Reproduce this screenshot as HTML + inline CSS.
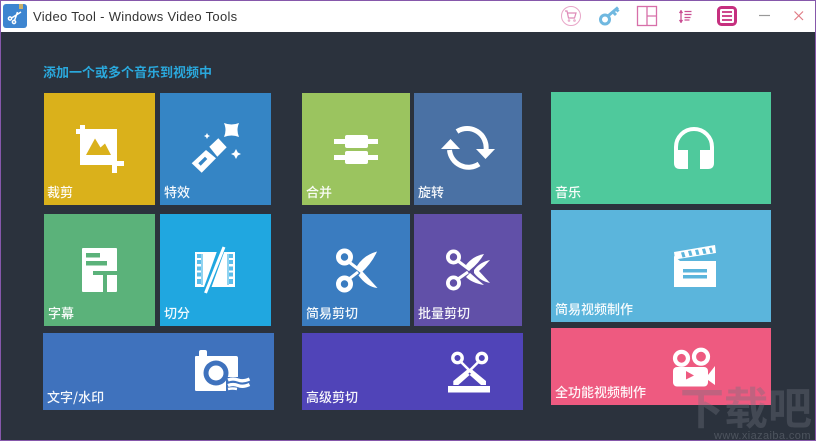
<!DOCTYPE html>
<html><head><meta charset="utf-8"><style>
html,body{margin:0;padding:0;background:#2b323d}
#w{position:relative;width:816px;height:441px;overflow:hidden;background:#2b323d;font-family:"Liberation Sans","Noto Sans CJK SC",sans-serif}
#tb{position:absolute;left:0;top:0;width:816px;height:32px;background:#fff}
#b{position:absolute;left:0;top:0;width:814px;height:439px;border:1px solid #8658ab;z-index:9}
.t{position:absolute}
.l{position:absolute;color:#fff;font-size:13px;line-height:16px;font-weight:500;white-space:nowrap;font-family:"Noto Sans CJK SC",sans-serif;opacity:.95}
svg{position:absolute;left:0;top:0}
</style></head><body><div id="w">
<div id="tb"></div>
<div style="position:absolute;left:33px;top:9px;font-size:13px;line-height:16px;color:#333;letter-spacing:.3px;white-space:nowrap">Video Tool - Windows Video Tools</div>
<div style="position:absolute;left:43px;top:64px;font-size:13px;line-height:16px;font-weight:700;color:#2aa8dc;white-space:nowrap;font-family:'Noto Sans CJK SC',sans-serif">添加一个或多个音乐到视频中</div>

<div class="t" style="left:44px;top:93px;width:111px;height:112px;background:#dab11b"></div>
<div class="t" style="left:160px;top:93px;width:111px;height:112px;background:#3585c5"></div>
<div class="t" style="left:44px;top:214px;width:111px;height:112px;background:#5bb27a"></div>
<div class="t" style="left:160px;top:214px;width:111px;height:112px;background:#20a7e0"></div>
<div class="t" style="left:43px;top:333px;width:231px;height:77px;background:#3f72bd"></div>
<div class="t" style="left:302px;top:93px;width:108px;height:112px;background:#9bc45f"></div>
<div class="t" style="left:414px;top:93px;width:108px;height:112px;background:#4a71a4"></div>
<div class="t" style="left:302px;top:214px;width:108px;height:112px;background:#3a7cc0"></div>
<div class="t" style="left:414px;top:214px;width:108px;height:112px;background:#6150a8"></div>
<div class="t" style="left:302px;top:333px;width:221px;height:77px;background:#5044b8"></div>
<div class="t" style="left:551px;top:92px;width:220px;height:112px;background:#4fc99c"></div>
<div class="t" style="left:551px;top:210px;width:220px;height:112px;background:#5bb5dc"></div>
<div class="t" style="left:551px;top:328px;width:220px;height:77px;background:#ee5a80"></div>

<svg width="816" height="441" viewBox="0 0 816 441">
<!-- app icon -->
<rect x="3" y="4" width="24" height="24" rx="3" fill="#3d85d0"/>
<rect x="19" y="4" width="4" height="5" fill="#c9b06a"/>
<g stroke="#fff" fill="none" stroke-width="1.5"><circle cx="10" cy="18.500" r="1.600"/><circle cx="14" cy="22" r="1.600"/><path d="M11.500 18L21 12M14.500 20.500L17.500 12"/></g>
<!-- toolbar -->
<g fill="none" stroke="#e8a6c8" stroke-width="1"><circle cx="571" cy="16" r="9.500"/><path d="M565 11h2l1.500 7h6l1.500-5h-8.500" stroke="#de8ab8" stroke-width="1.200"/><circle cx="569" cy="20.500" r=".8"/><circle cx="574.500" cy="20.500" r=".8"/></g>
<g fill="none" stroke="#70b8e0"><circle cx="605" cy="19.500" r="4.500" stroke-width="3"/><path d="M608 16L618 7.500M613 12l3 3M616 9l2.500 2.500" stroke-width="3"/></g>
<g fill="none" stroke="#d76fa9" stroke-width="1.300"><rect x="637.500" y="6.500" width="19" height="19"/><path d="M647 6.500v19M647 16h9.500"/></g>
<g fill="none" stroke="#c94d92" stroke-width="1.300"><path d="M681 10v13M679.500 13l1.500-2 1.500 2M679.500 20l1.500 2 1.500-2"/><path d="M684.500 11.500h7M684.500 14.500h7M684.500 17.500h6M684.500 20h5"/></g>
<rect x="718.500" y="7.500" width="17" height="17" rx="3" fill="none" stroke="#c6307f" stroke-width="3"/>
<path d="M722 12h10M722 16h10M722 20h10" stroke="#c6307f" stroke-width="1.800" fill="none"/>
<path d="M759 15.500h11" stroke="#999" stroke-width="1.200"/>
<path d="M794.500 11.500l8.500 8.500M803 11.500l-8.500 8.500" stroke="#e07c86" stroke-width="1.200"/>

<!-- crop -->
<path fill="#fff" d="M80 125h5v4h32v32h7v5h-7v7h-5v-8H80v-31h-4v-5h4z"/>
<path fill="#dab11b" d="M86 155l9-16.500 5.500 9 4.500-4 6 11.500z"/>
<!-- wand -->
<g fill="#fff">
<path d="M191.700 163.300L206 150L216 158.300L201.700 172.800z"/>
<path d="M209.300 146.700L218.300 138.300L226.700 147.300L217.300 156.700z"/>
<path d="M224 123Q231.500 126 239 123Q236 130 239 137Q231.500 134 224 137Q227 130 224 123z"/>
<path d="M236 149L237.800 152.500L241 154L237.800 155.500L236 159L234.200 155.500L231 154L234.200 152.500z"/>
<path d="M207 133L208 135L210 136L208 137L207 139L206 137L204 136L206 135z"/>
</g>
<path fill="#3585c5" d="M198.300 163.300L205 156.700L207.300 159L200.700 165.700z"/>
<!-- subtitle -->
<rect x="82" y="248" width="35" height="44" rx="1" fill="#fff"/>
<g fill="#5bb27a"><rect x="86" y="253" width="14" height="4.500"/><rect x="86" y="261" width="21" height="4.500"/><rect x="93" y="271" width="24" height="4"/><rect x="103" y="275" width="4" height="17"/></g>
<!-- film -->
<rect x="195" y="252" width="40" height="35" fill="#fff"/>
<g fill="#5cbde9"><rect x="197" y="254" width="4" height="4"/><rect x="197" y="260" width="4" height="4"/><rect x="197" y="266.500" width="4" height="4"/><rect x="197" y="272.500" width="4" height="4"/><rect x="197" y="279" width="4" height="5"/>
<rect x="229" y="254" width="4" height="4"/><rect x="229" y="260" width="4" height="4"/><rect x="229" y="266.500" width="4" height="4"/><rect x="229" y="272.500" width="4" height="4"/><rect x="229" y="279" width="4" height="5"/></g>
<path d="M202 254V285M228 254V285" stroke="#20a7e0" stroke-width="1" fill="none"/>
<path d="M223 245L206 292" stroke="#20a7e0" stroke-width="7" fill="none"/>
<path d="M224 247L205.500 293" stroke="#fff" stroke-width="3" fill="none"/>
<!-- camera -->
<path fill="#fff" d="M199 356v-4q0-2 2-2h4q2 0 2 2v4h29q2 0 2 2v33h-41q-2 0-2-1v-33q0-1 1-1z"/>
<circle cx="216" cy="373" r="12.500" fill="#3f72bd"/><circle cx="216" cy="373" r="7.500" fill="#fff"/>
<path d="M226 377h26v14h-26z" fill="#3f72bd"/>
<g fill="none" stroke="#fff" stroke-width="3.300"><path d="M228 380q5-2 10 0t11.500-1M228 385.500q5-2 10 0t11.500-1"/></g>
<path d="M228 389q4.500-1 9 0" fill="none" stroke="#fff" stroke-width="2.500"/>
<!-- merge -->
<g fill="#fff"><rect x="334" y="139" width="44" height="5"/><rect x="334" y="155" width="44" height="5"/><rect x="345" y="135" width="23" height="13" rx="2"/><rect x="345" y="151" width="23" height="13" rx="2"/></g>
<!-- rotate -->
<g fill="none" stroke="#fff" stroke-width="5"><path d="M457 131.500A19 19 0 0 1 486 150"/><path d="M449.500 150A19 19 0 0 0 479 164"/></g>
<g fill="#fff"><path d="M441 149h19l-9.500-10z"/><path d="M476 149h19l-9.500 10z"/></g>
<!-- scissors simple -->
<g fill="none" stroke="#fff"><circle cx="344.500" cy="257" r="6.100" stroke-width="4.800"/><circle cx="344.500" cy="284" r="6.100" stroke-width="4.800"/><path d="M349 262L362 272M349 279L358 272" stroke-width="3"/></g>
<g fill="#fff"><path d="M357 266Q364 255 377 251.500Q372 263 361 273z"/><path d="M362 271L377.500 288Q367 287 358.500 275.500z"/></g>
<!-- scissors batch -->
<g fill="none" stroke="#fff"><circle cx="453.500" cy="257" r="5.600" stroke-width="3.800"/><circle cx="453.500" cy="283" r="5.600" stroke-width="3.800"/><path d="M458 261L470 270M458 279L468 272" stroke-width="3"/></g>
<g fill="#fff"><path d="M466 265Q473 256 484 254Q479 263 470 270z"/><path d="M470 273L484 285Q472 283 466 277z"/><path d="M474 270Q480 262 490 260Q485 266 479 271L490 283Q480 281 474 273z"/></g>
<!-- scissors advanced -->
<g fill="none" stroke="#fff" stroke-width="3.400"><circle cx="457.500" cy="358" r="4.700"/><circle cx="481.800" cy="358" r="4.700"/></g>
<path d="M461.500 362.500L472 373M477.800 362.500L467.300 373" stroke="#fff" stroke-width="2.600" fill="none"/>
<path fill="#fff" d="M472 369.500L486 381L486 385L481 385L468 373.500zM467.300 369.500L453.300 381L453.300 385L458.300 385L471.300 373.500z"/>
<rect x="448" y="386" width="42" height="6.500" fill="#fff"/>
<!-- headphones -->
<path d="M676 156v-9a18 18 0 0 1 36 0v9" fill="none" stroke="#fff" stroke-width="4"/>
<path fill="#fff" d="M674 150h14v19h-8q-6 0-6-6zM700 150h14v13q0 6-6 6h-8z"/>
<!-- clapper -->
<rect x="674" y="261" width="42" height="26" fill="#fff"/>
<g fill="#5bb5dc"><rect x="683" y="269" width="24" height="3.500"/><rect x="683" y="275" width="24" height="3.500"/></g>
<path fill="#fff" d="M674 252L715 245L716 253L675 259.500z"/>
<g fill="#5bb5dc"><path d="M681 252.500l3-.5 1.500 5-3 .5zM688 251l3-.5 1.500 5-3 .5zM695 250l3-.5 1.500 5-3 .5zM702 249l3-.5 1.500 5-3 .5zM709 248l2.500-.5 1.500 5-2.500.5z"/></g>
<path fill="#fff" d="M674 256L680 261L674 266z"/>
<!-- movie camera -->
<g fill="none" stroke="#fff" stroke-width="4.200"><circle cx="681.500" cy="358.300" r="6.500"/><circle cx="701" cy="356.700" r="7"/></g>
<rect x="673" y="367" width="35" height="19.500" rx="4" fill="#fff"/>
<path fill="#fff" d="M708 375L715 366V385L708 380z"/>
<path fill="#ee5a80" d="M686 371L694 375.500L686 379.500z"/>
</svg>

<div class="l" style="left:47px;top:184px">裁剪</div>
<div class="l" style="left:164px;top:184px">特效</div>
<div class="l" style="left:48px;top:305px">字幕</div>
<div class="l" style="left:164px;top:305px">切分</div>
<div class="l" style="left:47px;top:389px">文字/水印</div>
<div class="l" style="left:306px;top:184px">合并</div>
<div class="l" style="left:418px;top:184px">旋转</div>
<div class="l" style="left:306px;top:305px">简易剪切</div>
<div class="l" style="left:418px;top:305px">批量剪切</div>
<div class="l" style="left:306px;top:389px">高级剪切</div>
<div class="l" style="left:555px;top:184px">音乐</div>
<div class="l" style="left:555px;top:301px">简易视频制作</div>
<div class="l" style="left:555px;top:384px">全功能视频制作</div>

<div style="position:absolute;left:680px;top:378px;font-size:44px;line-height:54px;font-weight:700;color:rgba(110,115,125,.36);white-space:nowrap;font-family:'Noto Sans CJK SC',sans-serif;z-index:5">下载吧</div>
<div style="position:absolute;left:714px;top:430px;font-size:11px;line-height:12px;color:rgba(130,135,145,.4);white-space:nowrap;letter-spacing:.4px;z-index:5">www.xiazaiba.com</div>
<div id="b"></div>
</div></body></html>
